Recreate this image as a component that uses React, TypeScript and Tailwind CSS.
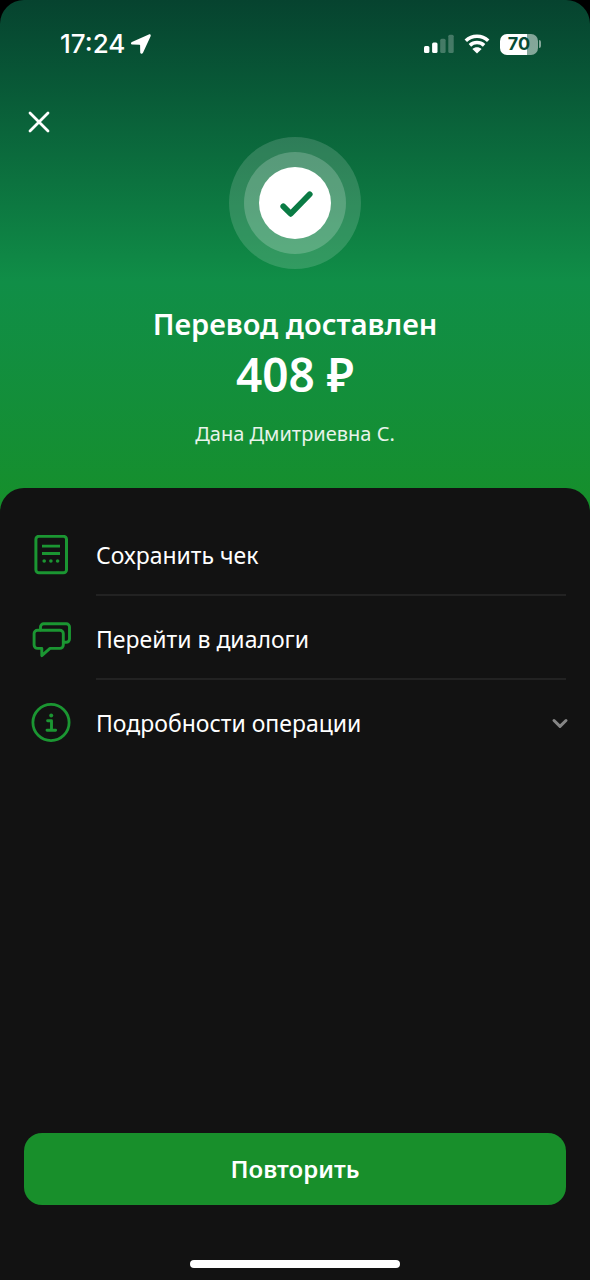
import React, { useState } from "react";

type Action = {
  id: string;
  label: string;
  icon: React.ReactNode;
  expandable?: boolean;
};

function ReceiptIcon() {
  return (
    <svg viewBox="0 0 40 40" className="w-10 h-10" fill="none" stroke="currentColor" strokeWidth="3">
      <rect x="4.9" y="1.3" width="30.6" height="36.4" rx="3" />
      <path d="M11 11.2h18M11 18.5h18" strokeWidth="2.8" />
      <g fill="currentColor" stroke="none">
        <circle cx="13.2" cy="26" r="1.8" />
        <circle cx="19.9" cy="26" r="1.8" />
        <circle cx="26.6" cy="26" r="1.8" />
      </g>
    </svg>
  );
}

function DialogsIcon() {
  return (
    <svg
      viewBox="0 0 40 40"
      className="w-10 h-10"
      fill="none"
      stroke="currentColor"
      strokeWidth="2.9"
      strokeLinejoin="round"
      strokeLinecap="round"
    >
      <path d="M6.5 11.2h22.4a3.4 3.4 0 0 1 3.4 3.4V26a3.4 3.4 0 0 1-3.4 3.4H19l-8.2 7.2v-7.2H6.5A3.4 3.4 0 0 1 3.1 26V14.6a3.4 3.4 0 0 1 3.4-3.4z" />
      <path d="M9.5 11V8a3.2 3.2 0 0 1 3.2-3.200h22.600a3.200 3.200 0 0 1 3.200 3.200v12.100a3.200 3.200 0 0 1-3.200 3.200h-2.700" />
    </svg>
  );
}

function InfoIcon() {
  return (
    <svg viewBox="0 0 40 40" className="w-10 h-10" fill="none" stroke="currentColor">
      <circle cx="20" cy="19.5" r="18.1" strokeWidth="2.8" />
      <circle cx="20.2" cy="12.4" r="2" fill="currentColor" stroke="none" />
      <path d="M16.6 17.8h3.9v9.2M16 27.2h8.6" strokeWidth="2.9" strokeLinecap="round" strokeLinejoin="round" />
    </svg>
  );
}

const actions: Action[] = [
  { id: "receipt", label: "Сохранить чек", icon: <ReceiptIcon /> },
  { id: "dialogs", label: "Перейти в диалоги", icon: <DialogsIcon /> },
  { id: "details", label: "Подробности операции", icon: <InfoIcon />, expandable: true },
];

function StatusBar() {
  return (
    <div className="flex h-22 items-center justify-between pl-[60px] pr-[49px] font-['Inter',sans-serif]">
      <div className="flex items-center gap-1.5">
        <span className="text-[26px] leading-8 font-medium">17:24</span>
        <svg viewBox="0 0 20 20" className="w-5 h-5" fill="currentColor">
          <path d="M17.8.4.9 8c-1.5.7-1.1 2.6.5 2.6l7.1.1c.4 0 .6.2.6.6l.1 7c0 1.7 2.1 2.1 2.8.5l7.5-16.3C20.2.9 19.2-.2 17.8.4z" />
        </svg>
      </div>

      <div className="flex items-center gap-2.5">
        <svg viewBox="0 0 30 20" className="w-[30px] h-5" fill="currentColor">
          <rect x="0" y="12" width="5.4" height="7" rx="1.5" />
          <rect x="8.1" y="8.6" width="5.4" height="10.4" rx="1.5" />
          <g opacity="0.25">
            <rect x="16.2" y="4.8" width="5.4" height="14.2" rx="1.5" />
            <rect x="24.3" y="0.7" width="5.4" height="18.3" rx="1.5" />
          </g>
        </svg>
        <svg viewBox="0 0 26 20" className="w-[26px] h-5">
          <path
            d="M1.8 6.7c6.3-5.9 16.1-5.9 22.4 0M5.9 11.3c4.1-3.7 10.1-3.7 14.2 0"
            fill="none"
            stroke="currentColor"
            strokeWidth="3.6"
          />
          <path d="M13 19.5l-4.600-4.500c2.500-2.200 6.700-2.200 9.200 0z" fill="currentColor" />
        </svg>
        <div className="flex items-center">
          <div className="flex h-[21px] w-[38px] items-center justify-center rounded-[7px] bg-linear-to-r from-white from-70% to-white/50 to-70% text-[18px] leading-5 font-bold text-[#064a35]">
            70
          </div>
          <div className="ml-px h-2 w-0.5 rounded-r-full bg-white/50" />
        </div>
      </div>
    </div>
  );
}

function ActionRow({ action, last }: { action: Action; last: boolean }) {
  const [open, setOpen] = useState(false);

  return (
    <li>
      <button
        aria-expanded={action.expandable ? open : undefined}
        onClick={() => setOpen(!open)}
        className="flex w-full items-center gap-[25px] pl-[31px] pr-6 text-left"
      >
        <span className="pt-0.5 text-[#1b9632]">{action.icon}</span>
        <span
          className={`flex h-21 flex-1 items-center justify-between border-b-2 pt-1 ${
            last ? "border-transparent" : "border-[#222222]"
          }`}
        >
          <span className="text-[23px] leading-8">{action.label}</span>
          {action.expandable && (
            <svg viewBox="0 0 28 28" className="-mr-2 h-7 w-7 text-[#858585]" fill="none" stroke="currentColor">
              <path d="M8 11.5l6 5.9 6-5.9" strokeWidth="3" strokeLinecap="round" strokeLinejoin="round" />
            </svg>
          )}
        </span>
      </button>
    </li>
  );
}

function App() {
  return (
    <div className="flex min-h-screen flex-col bg-black font-['Noto_Sans',sans-serif] text-white">
      <header className="rounded-t-3xl bg-linear-to-b from-[#06432f] via-[#108e47] via-55% to-[#168f2a] pb-16">
        <StatusBar />
        <div className="px-6 pt-[19px]">
          <button aria-label="Закрыть" className="flex h-[30px] w-[30px] items-center justify-center">
            <svg viewBox="0 0 22 22" className="w-[22px] h-[22px]" fill="none" stroke="currentColor">
              <path d="M2 2l18 18M20 2L2 20" strokeWidth="2.8" strokeLinecap="round" />
            </svg>
          </button>
        </div>

        <div className="flex flex-col items-center text-center">
          <div className="rounded-full bg-white/15 p-[15px]">
            <div className="rounded-full bg-white/20 p-[15px]">
              <div className="flex h-18 w-18 items-center justify-center rounded-full bg-white text-[#0a7b44]">
                <svg viewBox="0 0 36 36" className="w-9 h-9" fill="none" stroke="currentColor">
                  <path d="M6.3 21.4l7.4 7.4L32.7 9.3" strokeWidth="5.8" strokeLinecap="round" strokeLinejoin="round" />
                </svg>
              </div>
            </div>
          </div>
          <h1 className="mt-[35px] text-[29px] leading-10 font-semibold">Перевод доставлен</h1>
          <p className="text-[46px] leading-15 font-semibold">408 ₽</p>
          <p className="mt-4 text-[20px] leading-7 text-white/90">Дана Дмитриевна С.</p>
        </div>
      </header>

      <main className="-mt-6 flex flex-1 flex-col rounded-t-3xl bg-[#121212]">
        <ul className="pt-6">
          {actions.map((action, i) => (
            <ActionRow key={action.id} action={action} last={i === actions.length - 1} />
          ))}
        </ul>

        <div className="mt-auto px-6 pt-6">
          <button className="h-18 w-full rounded-[18px] bg-[#188f2b] text-[24px] leading-8 font-semibold">
            Повторить
          </button>
        </div>
        <div className="mx-auto mt-[55px] mb-3 h-2 w-[210px] rounded-full bg-white" />
      </main>
    </div>
  );
}

export default App;
